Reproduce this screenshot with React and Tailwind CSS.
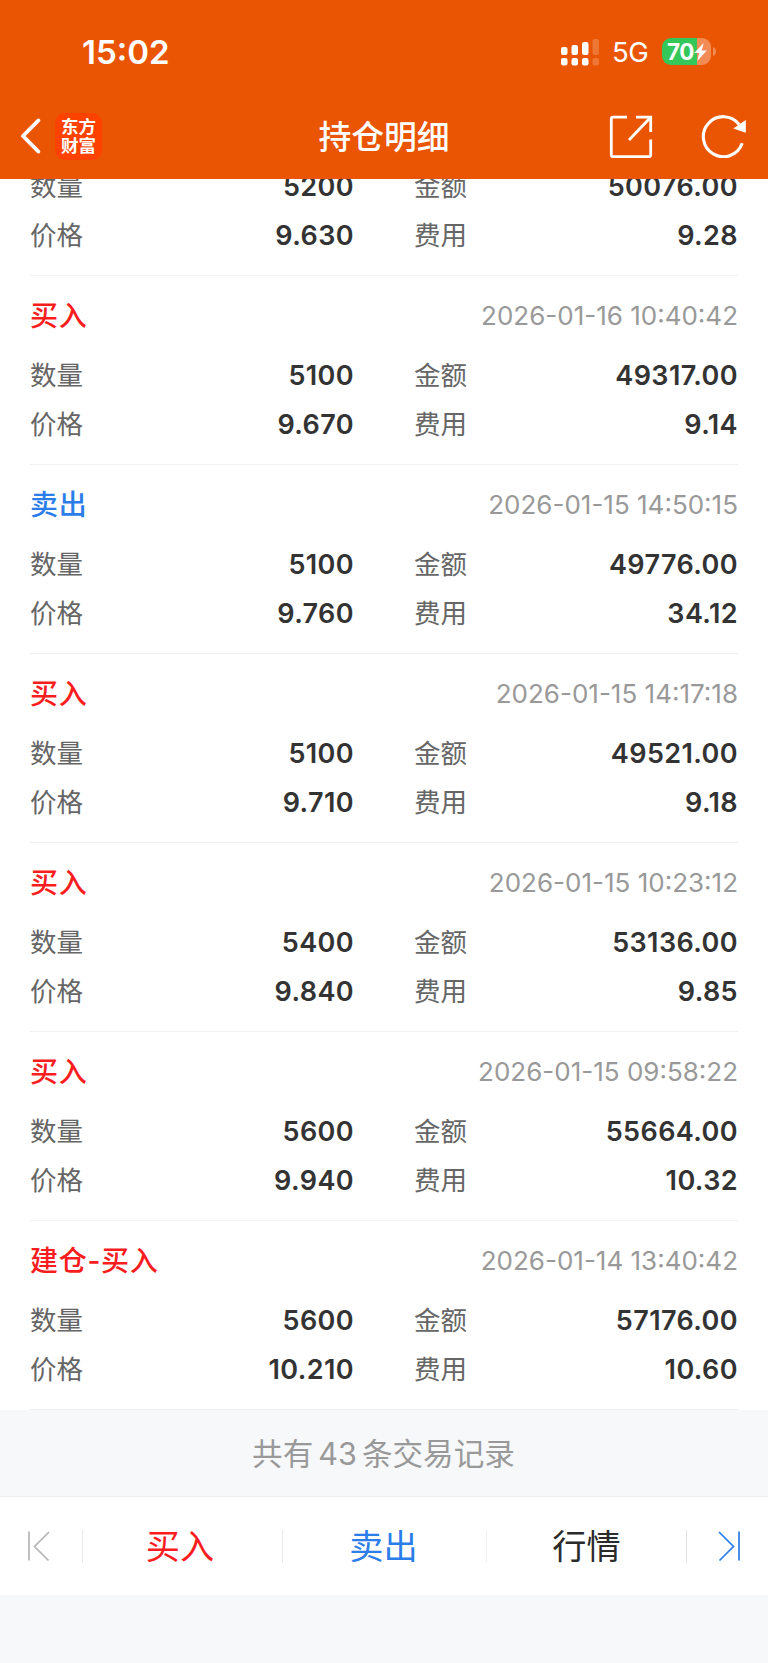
import React from "react";

const records = [
  {
    type: "买入",
    time: "2026-01-16 10:40:42",
    amount: "5100",
    price: "9.670",
    total: "49317.00",
    fee: "9.14",
  },
  {
    type: "卖出",
    time: "2026-01-15 14:50:15",
    amount: "5100",
    price: "9.760",
    total: "49776.00",
    fee: "34.12",
  },
  {
    type: "买入",
    time: "2026-01-15 14:17:18",
    amount: "5100",
    price: "9.710",
    total: "49521.00",
    fee: "9.18",
  },
  {
    type: "买入",
    time: "2026-01-15 10:23:12",
    amount: "5400",
    price: "9.840",
    total: "53136.00",
    fee: "9.85",
  },
  {
    type: "买入",
    time: "2026-01-15 09:58:22",
    amount: "5600",
    price: "9.940",
    total: "55664.00",
    fee: "10.32",
  },
  {
    type: "建仓-买入",
    time: "2026-01-14 13:40:42",
    amount: "5600",
    price: "10.210",
    total: "57176.00",
    fee: "10.60",
  },
];

const StatusBar = () => (
  <div className="flex h-[103px] items-center justify-between pl-[82px] pr-[52px] text-white">
    <span className="pt-px text-[33px] font-semibold leading-none">15:02</span>
    <div className="flex items-center">
      <svg width="39" height="28" viewBox="0 0 39 28" fill="#fff">
        <rect x="0" y="9" width="6.5" height="8" rx="2" />
        <rect x="10.5" y="7" width="6.5" height="10" rx="2" />
        <rect x="21" y="4" width="6.5" height="13" rx="2" />
        <rect x="31.5" y="1" width="6.5" height="16" rx="2" opacity="0.2" />
        <rect x="0" y="20" width="6.5" height="7.5" rx="2" />
        <rect x="10.5" y="20" width="6.5" height="7.5" rx="2" />
        <rect x="21" y="20" width="6.5" height="7.5" rx="2" />
        <rect x="31.5" y="20" width="6.5" height="7.5" rx="2" opacity="0.2" />
      </svg>
      <span className="ml-[12px] w-[38px] pt-[2px] text-[27.5px] leading-none tracking-[-0.5px]">
        5G
      </span>
      <div className="ml-[12px] flex h-[27px] w-[49px] items-center overflow-hidden rounded-[9px] bg-[linear-gradient(90deg,#34c759_71%,#f28b54_71%)] pl-[5px]">
        <span className="pt-px text-[22.5px] font-bold leading-none tracking-[-0.6px]">
          70
        </span>
        <svg width="13" height="18" viewBox="0 0 12 17" fill="#fff">
          <path d="M9 0 L0 9.5 H4.8 L3 17 L12 7 H7.2 Z" />
        </svg>
      </div>
      <svg className="ml-[2px]" width="3" height="9" viewBox="0 0 3 9">
        <path d="M0 0 Q3 1.5 3 4.5 T0 9 Z" fill="#f28b54" />
      </svg>
    </div>
  </div>
);

const NavBar = () => (
  <div className="grid h-[76px] grid-cols-[1fr_auto_1fr] items-center pb-[10px] text-white">
    <div className="flex items-center pl-[20px]">
      <svg
        width="22"
        height="36"
        viewBox="0 0 22 36"
        fill="none"
        stroke="#fff"
        strokeWidth="3.9"
        strokeLinecap="round"
        strokeLinejoin="round"
      >
        <path d="M18.3 2.5 L3 18 L18.3 33.5" />
      </svg>
      <div className="ml-[13px] flex h-[47px] w-[47px] flex-col items-center justify-center rounded-[10px] bg-[#ff4200] text-[17.5px] font-bold leading-[19.5px]">
        <span>东方</span>
        <span>财富</span>
      </div>
    </div>
    <h1 className="pt-[3px] text-[32.8px] font-medium leading-none">
      持仓明细
    </h1>
    <div className="flex items-center justify-end pr-[21px]">
      <svg
        width="44"
        height="44"
        viewBox="0 0 44 44"
        fill="none"
        stroke="#fff"
        strokeWidth="2.8"
      >
        <path d="M18 3.2 H4 Q2.3 3.2 2.3 4.9 V41 Q2.3 42.7 4 42.7 H40 Q41.7 42.7 41.7 41 V25.5" />
        <path d="M27 3.2 H41.7 V18" />
        <path d="M41 4 L20 26" />
      </svg>
      <svg
        className="ml-[48px]"
        width="46"
        height="44"
        viewBox="0 0 46 44"
        fill="none"
        stroke="#fff"
        strokeWidth="3.1"
      >
        <path d="M41.2 29.3 A20 20 0 1 1 38.2 10.5" />
        <path d="M44.8 6 V18.8 L32.3 14.6 Z" fill="#fff" stroke="none" />
      </svg>
    </div>
  </div>
);

const Field = ({ label, value }) => (
  <div className="flex items-center justify-between">
    <span className="text-[26.5px] text-[#666]">{label}</span>
    <span className="text-[27px] font-semibold tracking-[0.4px] text-[#333]">
      {value}
    </span>
  </div>
);

const Row = ({ label, value, label2, value2 }) => (
  <div className="grid h-[49px] shrink-0 grid-cols-2 items-center gap-x-[60px] leading-none">
    <Field label={label} value={value} />
    <Field label={label2} value={value2} />
  </div>
);

const Record = ({ record }) => (
  <div className="h-[189px] border-b border-[#f1f1f1] pt-4">
    <div className="mb-[10.5px] flex h-12 items-center justify-between leading-none">
      <span
        className={`text-[28px] font-medium tracking-[0.7px] ${
          record.type === "卖出" ? "text-[#2b7de9]" : "text-[#f91d20]"
        }`}
      >
        {record.type}
      </span>
      <span className="text-[26px] text-[#999]">{record.time}</span>
    </div>
    <Row
      label="数量"
      value={record.amount}
      label2="金额"
      value2={record.total}
    />
    <Row label="价格" value={record.price} label2="费用" value2={record.fee} />
  </div>
);

const BottomBar = () => (
  <div className="flex h-[98px] items-center bg-white text-[34.2px] leading-none">
    <button className="flex w-[82px] justify-center pr-[5px]">
      <svg
        width="24"
        height="32"
        viewBox="0 0 24 32"
        fill="none"
        stroke="#b5b5b5"
        strokeWidth="1.7"
      >
        <path d="M2 1.5 V30.5 M22 2 L7.5 16.5 L21.5 30.5" />
      </svg>
    </button>
    <div className="h-[33px] w-px bg-[#ebebeb]" />
    <button className="w-[199px] pr-[5px] pt-[2px] text-[#f91d20]">买入</button>
    <div className="h-[33px] w-px bg-[#ebebeb]" />
    <button className="w-[203px] pr-[2px] pt-[2px] text-[#2b7de9]">卖出</button>
    <div className="h-[33px] w-px bg-[#f0f0f0]" />
    <button className="w-[199px] pt-[2px] text-[#2b2b2b]">行情</button>
    <div className="h-[33px] w-px bg-[#e3e3e3]" />
    <button className="flex flex-1 justify-center pl-[3px]">
      <svg
        width="24"
        height="32"
        viewBox="0 0 24 32"
        fill="none"
        stroke="#2b7de9"
        strokeWidth="1.7"
      >
        <path d="M22 1.5 V30.5 M2 2 L16.5 16.5 L2.5 30.5" />
      </svg>
    </button>
  </div>
);

const App = () => {
  return (
    <div className="flex h-[1663px] w-[768px] flex-col overflow-hidden bg-[#f7f8fa] font-['Inter','Noto_Sans_CJK_SC',sans-serif]">
      <header className="h-[179px] shrink-0 bg-[#ea5504]">
        <StatusBar />
        <NavBar />
      </header>

      <main className="bg-white px-[30px]">
        {/* record cut off by the header while scrolled */}
        <div className="flex h-[97px] flex-col justify-end overflow-hidden border-b border-[#f1f1f1] pb-[15.5px]">
          <Row label="数量" value="5200" label2="金额" value2="50076.00" />
          <Row label="价格" value="9.630" label2="费用" value2="9.28" />
        </div>
        {records.map((record) => (
          <Record key={record.time} record={record} />
        ))}
      </main>

      <div className="flex h-[87px] items-center justify-center border-b border-[#f0f0f2] pr-px pt-[3px] text-[30.6px] leading-none text-[#999]">
        <span>共有</span>
        <span className="mx-[5px]">43</span>
        <span>条交易记录</span>
      </div>
      <BottomBar />
    </div>
  );
};

export default App;
